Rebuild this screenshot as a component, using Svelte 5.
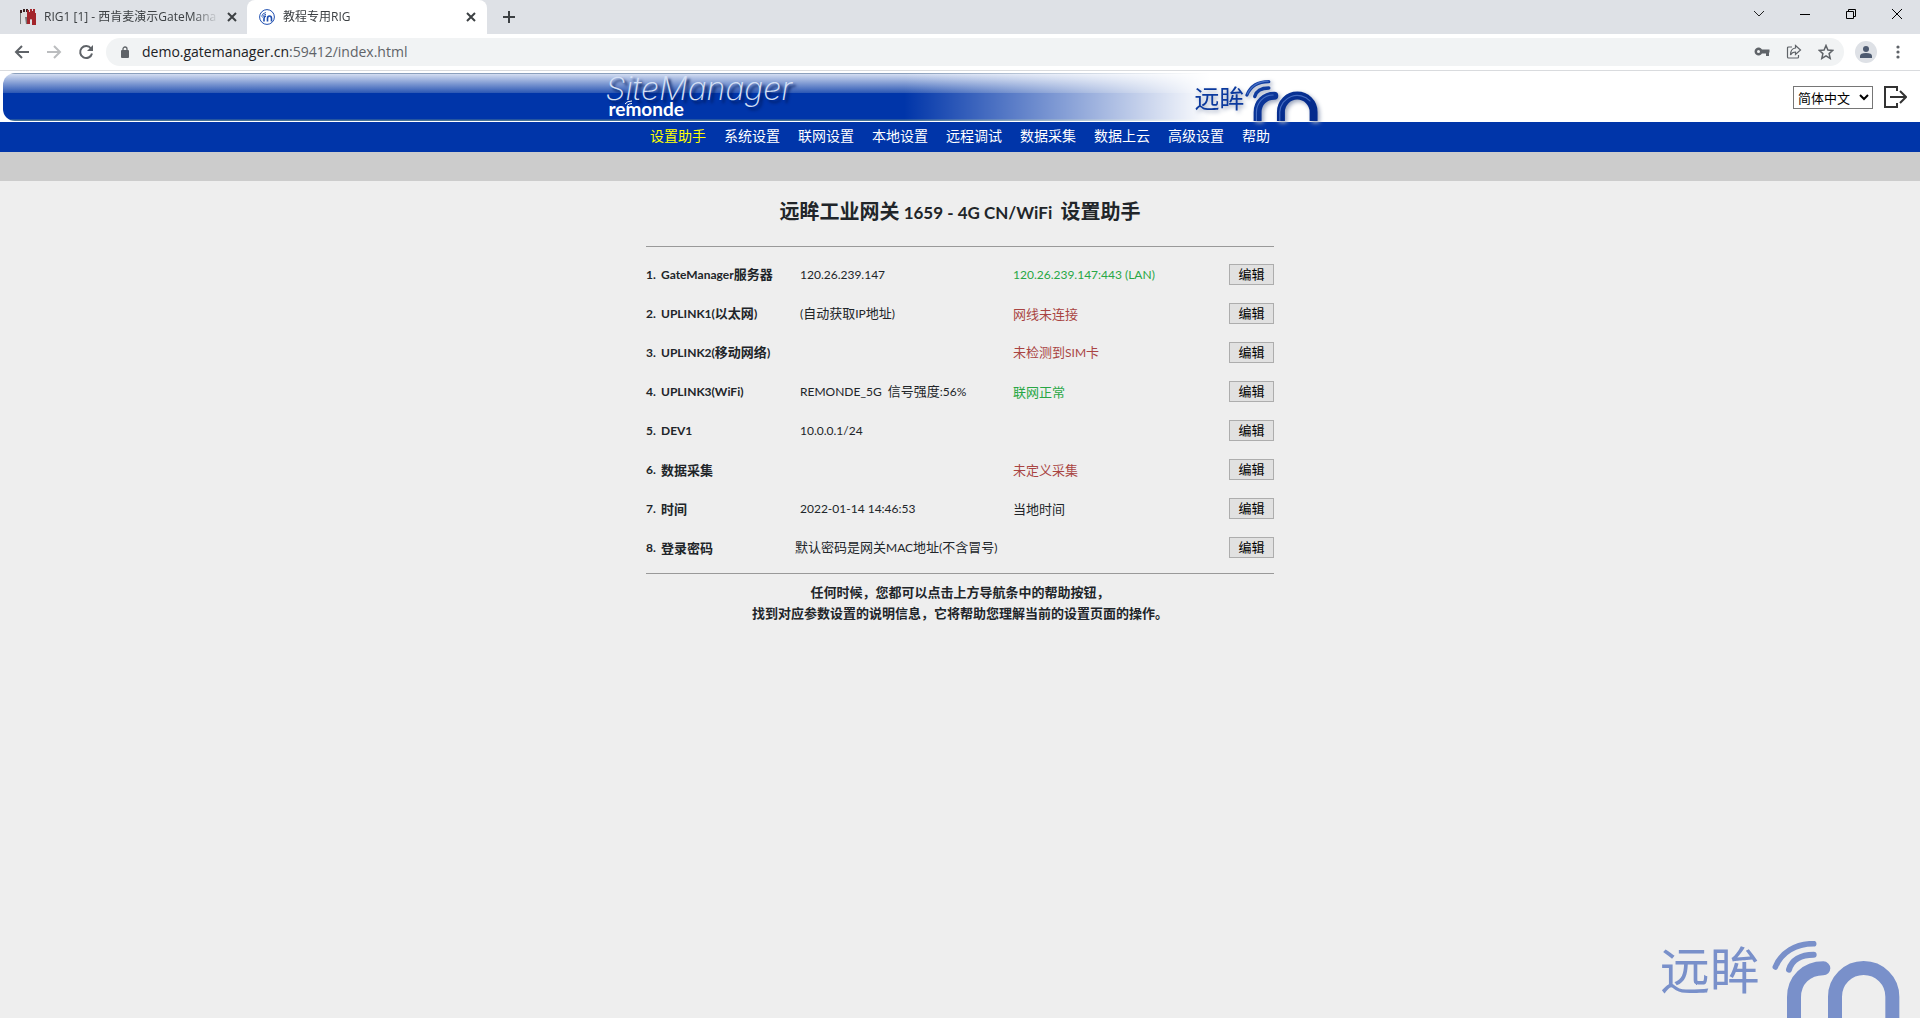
<script lang="ts">
  type Status = 'ok' | 'bad' | 'plain';

  interface Row {
    label: string;
    value?: string;
    wide?: boolean;
    status?: string;
    kind?: Status;
  }

  const menu = ['设置助手', '系统设置', '联网设置', '本地设置', '远程调试', '数据采集', '数据上云', '高级设置', '帮助'];

  const rows: Row[] = [
    { label: 'GateManager服务器', value: '120.26.239.147', status: '120.26.239.147:443 (LAN)', kind: 'ok' },
    { label: 'UPLINK1(以太网)', value: '(自动获取IP地址)', status: '网线未连接', kind: 'bad' },
    { label: 'UPLINK2(移动网络)', status: '未检测到SIM卡', kind: 'bad' },
    { label: 'UPLINK3(WiFi)', value: 'REMONDE_5G  信号强度:56%', status: '联网正常', kind: 'ok' },
    { label: 'DEV1', value: '10.0.0.1/24' },
    { label: '数据采集', status: '未定义采集', kind: 'bad' },
    { label: '时间', value: '2022-01-14 14:46:53', status: '当地时间', kind: 'plain' },
    { label: '登录密码', value: '默认密码是网关MAC地址(不含冒号)', wide: true }
  ];

  let active = $state(0);
  let language = $state('简体中文');
  let address = $state('demo.gatemanager.cn:59412/index.html');

  // Latin runs are set a size smaller than the Chinese around them
  const runs = (text: string) => text.match(/[\x00-\x7f]+|[^\x00-\x7f]+/g) ?? [];
  const isLatin = (run: string) => run.charCodeAt(0) < 128;
</script>

{#snippet mixed(text: string)}{#each runs(text) as run}{#if isLatin(run)}<span class="latin">{run}</span>{:else}{run}{/if}{/each}{/snippet}

{#snippet mark()}
  <path d="M408 141C426 97 468 71 523 71" stroke-width="17" />
  <path d="M449 149C457 121 484 104 523 104" stroke-width="18" />
  <path d="M464 310V232C464 180 502 145 552 145" stroke-width="42" />
  <path d="M587 310V230A86 86 0 0 1 759 230V310" stroke-width="42" />
{/snippet}

{#snippet cross()}
  <svg width="10" height="10" viewBox="0 0 10 10"><path d="M1 1l8 8M9 1L1 9" stroke="#3c4043" stroke-width="2" /></svg>
{/snippet}

<div class="window">
  <div class="tabs">
    <div class="tab">
      <svg class="favicon" width="16" height="16" viewBox="0 0 16 16">
        <path d="M0 2l2-1v2l1-2 2-1v2l2-1 1 1v14H5v-5q-1-2-2 0v5H0z" fill="#ddd" />
        <path d="M0 1h2v3H0zM3 0h2v3H3zM6 0h2v3H6z" fill="#3a2020" />
        <path d="M7 1h2v2h1V0h2v2h1V0h2v4h1v12h-4v-5q-1-2-2 0v4H7z" fill="#a3252b" />
        <path d="M0 4h1v11H0zM5 8h2v7H6z" fill="#777" />
      </svg>
      <span class="tab-title">RIG1 [1] - 西肯麦演示GateMana</span>
      <button class="bare" aria-label="关闭标签页">{@render cross()}</button>
    </div>
    <div class="tab current">
      <svg class="favicon" width="16" height="16" viewBox="0 0 16 16" fill="none" stroke="#1f4fb0">
        <circle cx="8" cy="8" r="7.400" stroke-width="1" />
        <path d="M5 12.500V9.500q0-2 2-2.500M8.500 12.500V9.500q0-2.500 2-2.500t2 2.500v3" stroke-width="1.600" />
        <path d="M2.500 7.500q1-3.500 4.500-4M3.500 8.500q1-3 3.500-3.200" stroke-width="0.900" />
      </svg>
      <span class="tab-title">教程专用RIG</span>
      <button class="bare" aria-label="关闭标签页">{@render cross()}</button>
    </div>
    <button class="bare new-tab" aria-label="新标签页">
      <svg width="12" height="12" viewBox="0 0 12 12"><path d="M6 0v12M0 6h12" stroke="#3c4043" stroke-width="2" /></svg>
    </button>
    <div class="window-controls">
      <button class="bare" aria-label="搜索标签页">
        <svg width="12" height="12" viewBox="0 0 12 12" fill="none"><path d="M1 3l5 5 5-5" stroke="#222" /></svg>
      </button>
      <button class="bare" aria-label="最小化">
        <svg width="12" height="12" viewBox="0 0 12 12"><path d="M1 6.500h10" stroke="#000" /></svg>
      </button>
      <button class="bare" aria-label="还原">
        <svg width="12" height="12" viewBox="0 0 12 12" fill="none"><path d="M1.500 3.500h7v7h-7zM3.500 3.500v-2h7v7h-2" stroke="#000" /></svg>
      </button>
      <button class="bare" aria-label="关闭">
        <svg width="12" height="12" viewBox="0 0 12 12"><path d="M1 1l10 10M11 1L1 11" stroke="#000" /></svg>
      </button>
    </div>
  </div>

  <div class="toolbar">
    <div class="history">
      <button class="bare" aria-label="后退">
        <svg width="16" height="16" viewBox="0 0 16 16" fill="none"><path d="M15 8H2M8 2L2 8l6 6" stroke="#5f6368" stroke-width="2" /></svg>
      </button>
      <button class="bare" aria-label="前进">
        <svg width="16" height="16" viewBox="0 0 16 16" fill="none"><path d="M1 8h13M8 2l6 6-6 6" stroke="#bbbdbf" stroke-width="2" /></svg>
      </button>
      <button class="bare" aria-label="重新加载">
        <svg width="16" height="16" viewBox="0 0 16 16" fill="none">
          <path d="M13 4.500A6 6 0 1 0 14 9.500" stroke="#5f6368" stroke-width="2" />
          <path d="M15 1v6H9z" fill="#5f6368" />
        </svg>
      </button>
    </div>
    <div class="address">
      <svg width="10" height="12" viewBox="0 0 10 12" fill="none">
        <rect x="1" y="4" width="8" height="8" rx="1" fill="#5f6368" /><path d="M3 5V3a2 2 0 0 1 4 0v2" stroke="#5f6368" stroke-width="1.300" />
      </svg>
      <span class="url" role="textbox" aria-label="地址栏" tabindex="0">{address.split(':')[0]}<span class="path">:{address.split(':')[1]}</span></span>
      <div class="page-actions">
        <button class="bare" aria-label="密码">
          <svg width="16" height="16" viewBox="0 0 16 16">
            <path d="M8 5.500h7.500v3H15V12h-3V9.500H8A4 4 0 1 1 8 5.500zM4.500 6a1.500 1.500 0 1 0 0 3 1.500 1.500 0 0 0 0-3z" fill="#5f6368" fill-rule="evenodd" />
          </svg>
        </button>
        <button class="bare" aria-label="分享">
          <svg width="16" height="16" viewBox="0 0 16 16" fill="none" stroke="#5f6368" stroke-width="1.200">
            <path d="M6 3H2.500Q1.500 3 1.500 4v9q0 1 1 1h9q1 0 1-1v-2" /><path d="M9.500 1.500l5 4.500-5 4.500V8Q6 8 4.500 11 4.500 4.500 9.500 4z" />
          </svg>
        </button>
        <button class="bare" aria-label="收藏">
          <svg width="16" height="16" viewBox="0 0 16 16" fill="none"><path d="M8 1.500l1.900 4.500 4.900.4-3.700 3.200 1.100 4.800L8 11.900l-4.200 2.500 1.100-4.800L1.200 6.400l4.900-.4z" stroke="#5f6368" stroke-width="1.500" /></svg>
        </button>
      </div>
    </div>
    <button class="bare" aria-label="用户">
      <svg width="22" height="22" viewBox="0 0 22 22" fill="#4d5a70">
        <circle cx="11" cy="11" r="11" fill="#dee1e6" /><circle cx="11" cy="8" r="3" /><path d="M5 17v-2q0-3 6-3t6 3v2z" />
      </svg>
    </button>
    <button class="bare menu-dots" aria-label="菜单">
      <svg width="4" height="14" viewBox="0 0 4 14" fill="#5f6368"><circle cx="2" cy="2" r="1.600" /><circle cx="2" cy="7" r="1.600" /><circle cx="2" cy="12" r="1.600" /></svg>
    </button>
  </div>

  <header>
    <div class="banner">
      <div class="brand">
        <div class="product">
          <span class="site">SiteManager</span>
          <span class="maker">
            remonde
            <svg class="waves" width="10" height="6" viewBox="0 0 10 6" fill="none" stroke="#fff"><path d="M1 4q2-3 7-3M3 5.500q2-2 5-2" /></svg>
          </span>
        </div>
        <div class="company">
          <span>远眸</span>
          <svg width="73" height="41" viewBox="398 62 384 216" fill="none" stroke-linecap="round">
            <defs>
              <linearGradient id="sheen" gradientUnits="userSpaceOnUse" x1="398" y1="62" x2="560" y2="290">
                <stop offset="0" stop-color="#1443a8" /><stop offset="1" stop-color="#042b8c" />
              </linearGradient>
            </defs>
            <g stroke="url(#sheen)">{@render mark()}</g>
            <g stroke="#5f86d4" stroke-width="6" opacity="0.7">
              <path d="M410 136C428 96 468 68 520 68M458 278V232C458 182 496 141 546 141M581 278V230A92 92 0 0 1 740 172" />
            </g>
          </svg>
        </div>
      </div>
      <div class="session">
        <select bind:value={language} aria-label="语言">
          <option>简体中文</option>
          <option>English</option>
        </select>
        <button class="bare" aria-label="退出">
          <svg width="24" height="24" viewBox="0 0 24 24" fill="none" stroke="#333" stroke-width="2">
            <path d="M14 6V2H2v20h12v-4M7 12h15M17 6l6 6-6 6" />
          </svg>
        </button>
      </div>
    </div>
    <nav>
      {#each menu as item, i}
        <a href="#{i}" class:active={active === i} onclick={() => (active = i)}>{item}</a>
      {/each}
    </nav>
    <div class="subnav"></div>
  </header>

  <main>
    <h1>{@render mixed('远眸工业网关 1659 - 4G CN/WiFi  设置助手')}</h1>
    <table>
      <tbody>
        {#each rows as row, i}
          <tr>
            <th class="num">{i + 1}.</th>
            <th class="label">{@render mixed(row.label)}</th>
            <td class="value" class:wide={row.wide} colspan={row.wide ? 2 : 1}>{@render mixed(row.value ?? '')}</td>
            {#if !row.wide}
              <td class="status {row.kind ?? 'plain'}">{@render mixed(row.status ?? '')}</td>
            {/if}
            <td class="action"><button class="edit">编辑</button></td>
          </tr>
        {/each}
      </tbody>
    </table>
    <p>任何时候，您都可以点击上方导航条中的帮助按钮，<br />找到对应参数设置的说明信息，它将帮助您理解当前的设置页面的操作。</p>

    <div class="watermark">
      <span>远眸</span>
      <svg width="128" height="77" viewBox="398 63 384 231" fill="none" stroke="#7990ca" stroke-linecap="round">{@render mark()}</svg>
    </div>
  </main>
</div>

<style>
  :global(body) {
    margin: 0;
  }

  .window {
    display: flex;
    flex-direction: column;
    min-height: 100vh;
    background: #eee;
    color: #212529;
    font: 13px/20px "Noto Sans CJK SC", sans-serif;
  }

  svg {
    display: block;
    flex: none;
  }

  .bare {
    display: block;
    padding: 0;
    border: 0;
    background: none;
  }

  /* browser chrome */
  .tabs {
    display: flex;
    align-items: center;
    height: 34px;
    background: #dee1e6;
    font: 12px/16px "Open Sans", "Noto Sans CJK SC", sans-serif;
    color: #3c4043;
  }

  .tab {
    display: flex;
    align-items: center;
    gap: 8px;
    box-sizing: border-box;
    width: 247px;
    height: 34px;
    padding: 0 10px 0 20px;
  }

  .tab.current {
    width: 240px;
    padding: 0 11px 0 12px;
    border-radius: 8px 8px 0 0;
    background: #fff;
  }

  .tab-title {
    flex: 1;
    overflow: hidden;
    white-space: nowrap;
    mask-image: linear-gradient(to right, #000 85%, transparent);
  }

  .new-tab {
    margin-left: 16px;
  }

  .window-controls {
    display: flex;
    gap: 34px;
    height: 28px;
    align-items: center;
    align-self: flex-start;
    margin-left: auto;
    padding-right: 17px;
  }

  .toolbar {
    display: flex;
    align-items: center;
    height: 36px;
    padding-right: 20px;
    border-bottom: 1px solid #d9dbde;
    background: #fff;
  }

  .history {
    display: flex;
    gap: 16px;
    padding: 0 12px 0 14px;
  }

  .address {
    display: flex;
    flex: 1;
    align-items: center;
    gap: 12px;
    height: 28px;
    margin-right: 11px;
    padding: 0 10px 0 14px;
    border-radius: 14px;
    background: #f1f3f4;
  }

  .url {
    color: #202124;
    font: 14px/20px "Open Sans", sans-serif;
  }

  .path {
    color: #5f6368;
  }

  .page-actions {
    display: flex;
    gap: 16px;
    margin-left: auto;
  }

  .menu-dots {
    margin-left: 19px;
  }

  /* page header */
  header {
    background: #fff;
  }

  .banner {
    display: grid;
    grid-template-columns: 1fr 712px 1fr;
    height: 48px;
    margin: 2px 0 1px 3px;
    border-radius: 12px 0 0 12px;
    background:
      linear-gradient(to right, transparent 47%, #fff 63%),
      linear-gradient(#8ba0bd 1px, #d3ddf1 1px, #2b57b4 20px, #0035a9 20px, #0035a9 46px, #4a7596 47px);
  }

  .brand {
    display: flex;
    grid-column: 2;
    justify-content: space-between;
  }

  .product {
    display: flex;
    flex-direction: column;
    padding-top: 2px;
    color: #fff;
  }

  .site {
    color: #d5e0f5;
    font: italic 200 32px/28px Inter, sans-serif;
    text-shadow: 3px 3px 3px #001a5c;
  }

  .maker {
    position: relative;
    align-self: flex-start;
    padding-left: 3px;
    font: 700 19px/12px Lato, sans-serif;
  }

  .waves {
    position: absolute;
    top: -3px;
    left: 18px;
  }

  .company {
    display: flex;
    align-items: flex-end;
    color: #0c3a9e;
    font-size: 25px;
    line-height: 48px;
    filter: drop-shadow(2px 2px 2px #9aa5bd);
  }

  .session {
    display: flex;
    align-items: center;
    justify-content: flex-end;
    gap: 10px;
    padding-right: 13px;
  }

  select {
    width: 80px;
    height: 23px;
    border: 1px solid #767676;
    border-radius: 0;
    background: #fff;
    font: 13px "Noto Sans CJK SC", sans-serif;
  }

  nav {
    display: flex;
    justify-content: center;
    gap: 18px;
    padding-bottom: 4px;
    background: #0035a9;
    font-size: 14px;
    line-height: 26px;
  }

  nav a {
    color: #fff;
    text-decoration: none;
  }

  nav a.active {
    color: #ff0;
  }

  .subnav {
    height: 29px;
    background: #ccc;
  }

  /* setup assistant */
  main {
    display: flex;
    flex: 1;
    flex-direction: column;
    align-items: center;
  }

  h1 {
    margin: 15px 0 19px;
    font-size: 20px;
    line-height: 29px;
    white-space: pre;
  }

  .latin {
    font-family: Lato, sans-serif;
    font-size: 12px;
  }

  h1 .latin {
    font-size: 17px;
  }

  table {
    width: 628px;
    padding: 8px 0 6px;
    border-top: 1px solid #999;
    border-bottom: 1px solid #999;
    border-spacing: 0;
    table-layout: fixed;
  }

  th,
  td {
    height: 39px;
    padding: 0;
    text-align: left;
    white-space: pre;
  }

  .num {
    width: 15px;
    font: 700 12px Lato, sans-serif;
  }

  .label {
    width: 134px;
  }

  .value {
    width: 213px;
    padding-left: 5px;
  }

  .value.wide {
    padding-left: 0;
  }

  .ok {
    color: #28a745;
  }

  .bad {
    color: #a94442;
  }

  .action {
    text-align: right;
  }

  .edit {
    width: 45px;
    height: 21px;
    padding: 0 0 2px;
    border: 1px solid #adadad;
    background: #e1e1e1;
    font: 13px/17px "Noto Sans CJK SC", sans-serif;
  }

  p {
    margin: 7px 0;
    font-weight: 700;
    line-height: 21px;
    text-align: center;
  }

  .watermark {
    display: flex;
    align-self: flex-end;
    align-items: flex-start;
    gap: 12px;
    margin-top: auto;
    padding-right: 20px;
    color: #7990ca;
    font-size: 50px;
    line-height: 52px;
  }
</style>
